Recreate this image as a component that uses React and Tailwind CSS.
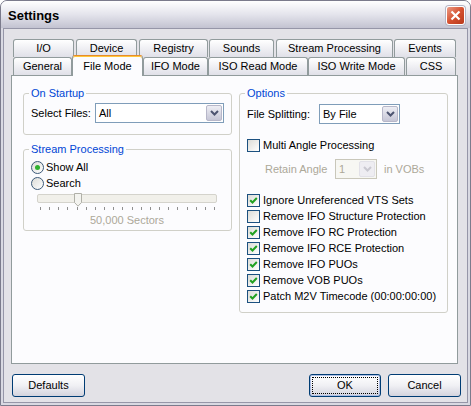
import React from "react";

const font = "font-['Liberation_Sans',Arial,sans-serif]";

function Tab({ label, className = "", selected }) {
  if (selected) {
    return (
      <div
        className={`relative z-10 h-[21px] -mb-px flex items-center justify-center bg-[#fcfcfe] border border-b-0 border-[#919b9c] border-t-[#e68b2c] rounded-t-[3px] shadow-[inset_0_1px_0_#ffc83c] ${className}`}
      >
        {label}
      </div>
    );
  }
  return (
    <div
      className={`h-[18px] flex items-center justify-center bg-gradient-to-b from-white to-[#e0e0e8] border border-b-0 border-[#919b9c] rounded-t-[3px] ${className}`}
    >
      {label}
    </div>
  );
}

function Chevron({ color }) {
  return (
    <svg width="9" height="6" viewBox="0 0 9 6">
      <path d="M1 1 L4.5 4.5 L8 1" stroke={color} strokeWidth="2" fill="none" />
    </svg>
  );
}

function Select({ value, className = "", disabled }) {
  return (
    <div
      className={`h-[20px] flex items-center border ${
        disabled ? "border-[#c9c7ba] bg-[#f7f7f3] text-[#aca899]" : "border-[#7f9db9] bg-white"
      } ${className}`}
    >
      <span className="flex-1 pl-[3px]">{value}</span>
      <span
        className={`w-[16px] h-[16px] mr-px rounded-[2px] border flex items-center justify-center ${
          disabled
            ? "border-[#e2e1e8] bg-[#eeedf2]"
            : "border-[#b7b7c9] bg-gradient-to-b from-[#eeeef4] to-[#c6c6d6]"
        }`}
      >
        <Chevron color={disabled ? "#c9c8d0" : "#4d5470"} />
      </span>
    </div>
  );
}

function Check({ checked, label }) {
  return (
    <div className="flex items-center h-[16px]">
      <span className="w-[13px] h-[13px] border border-[#1c5180] bg-gradient-to-br from-[#dcdcd7] to-white flex items-center justify-center">
        {checked && (
          <svg width="9" height="9" viewBox="0 0 9 9">
            <path d="M1.2 4.2 L3.5 6.5 L7.8 2" stroke="#21a121" strokeWidth="2" fill="none" />
          </svg>
        )}
      </span>
      <span className="ml-[3px]">{label}</span>
    </div>
  );
}

function Radio({ checked, label }) {
  return (
    <div className="flex items-center h-[16px]">
      <span className="w-[13px] h-[13px] rounded-full border border-[#3c5a78] bg-gradient-to-br from-[#dcdcd7] to-white flex items-center justify-center">
        {checked && <span className="w-[5px] h-[5px] rounded-full bg-[#2fb12f]" />}
      </span>
      <span className="ml-[2px]">{label}</span>
    </div>
  );
}

function Group({ title, className = "", children }) {
  return (
    <fieldset
      className={`border border-[#d0d0c8] rounded-[3px] px-[7px] ${className}`}
    >
      <legend className="-ml-[2px] px-[2px] leading-[13px] text-[#0046d5]">{title}</legend>
      {children}
    </fieldset>
  );
}

function Btn({ label, className = "", isDefault }) {
  return (
    <div
      className={`h-[23px] rounded-[3px] border border-[#003c74] bg-gradient-to-b from-white via-[#f0f0f4] to-[#d4d4de] flex p-[2px] ${
        isDefault ? "shadow-[inset_0_0_0_1px_#aebfe6]" : ""
      } ${className}`}
    >
      <div
        className={`flex-1 flex items-center justify-center ${
          isDefault ? "border border-dotted border-black" : ""
        }`}
      >
        {label}
      </div>
    </div>
  );
}

const ticks = Array.from({ length: 20 }, (_, i) => i);

export default function App() {
  return (
    <div
      className={`${font} text-[11px] text-black w-[471px] h-[406px] flex flex-col bg-[#d9d9e2] border border-[#7b7b8c] rounded-t-[7px] overflow-hidden`}
    >
      {/* title bar */}
      <div className="h-[27px] flex items-center justify-between pl-[7px] pr-[5px] bg-gradient-to-b from-white via-[#e4e4ec] to-[#c3c3d1]">
        <span className="mt-[2px] text-[13px] font-bold">Settings</span>
        <span className="w-[19px] h-[19px] mt-[1px] rounded-[3px] border border-white bg-gradient-to-br from-[#ea9a84] via-[#d5502f] to-[#b8391c] flex items-center justify-center shadow-[0_0_0_1px_#b4b4c4]">
          <svg width="11" height="11" viewBox="0 0 11 11">
            <path d="M1.5 1.5 L9.5 9.5 M9.5 1.5 L1.5 9.5" stroke="white" strokeWidth="2.2" />
          </svg>
        </span>
      </div>

      {/* body */}
      <div className="flex-1 mx-[2px] mb-[2px] border border-[#9696a8] bg-[#e3e2e7] flex flex-col">
        <div className="pt-[10px] pl-[9px] flex">
          <Tab label="I/O" className="w-[61px]" />
          <Tab label="Device" className="w-[61px] ml-[2px]" />
          <Tab label="Registry" className="w-[69px] ml-[2px]" />
          <Tab label="Sounds" className="w-[65px] ml-px" />
          <Tab label="Stream Processing" className="w-[117px] ml-[2px]" />
          <Tab label="Events" className="w-[62px] ml-px" />
        </div>
        <div className="pl-[9px] flex items-end h-[18px]">
          <Tab label="General" className="w-[59px]" />
          <Tab label="File Mode" className="w-[71px]" selected />
          <Tab label="IFO Mode" className="w-[65px]" />
          <Tab label="ISO Read Mode" className="w-[100px]" />
          <Tab label="ISO Write Mode" className="w-[97px]" />
          <Tab label="CSS" className="w-[50px] ml-px" />
        </div>

        {/* tab page */}
        <div className="ml-[7px] w-[447px] h-[289px] border border-[#919b9c] bg-[#fcfcfe] pl-[11px] pt-[11px] flex gap-[7px] items-start">
          <div className="w-[209px] flex flex-col">
            <Group title="On Startup" className="pb-[11px]">
              <div className="mt-[3px] flex items-center">
                <span className="w-[64px]">Select Files:</span>
                <Select value="All" className="w-[129px]" />
              </div>
            </Group>
            <Group title="Stream Processing" className="mt-[8px] pb-[3px]">
              <div className="mt-[3px]">
                <Radio checked label="Show All" />
                <Radio label="Search" />
              </div>
              <div className="relative mt-[3px] ml-[6px] w-[180px] h-[9px] border border-[#d4d3cc] bg-[#f1f0ea] rounded-[2px]">
                <svg
                  className="absolute left-[36px] -top-[2px]"
                  width="8"
                  height="14"
                  viewBox="0 0 8 14"
                >
                  <path
                    d="M0.5 0.5 H7.5 V9.5 L4 13.2 L0.5 9.5 Z"
                    fill="#f3f3ef"
                    stroke="#b0b0a8"
                  />
                </svg>
              </div>
              <div className="mt-[4px] ml-[9px] w-[175px] flex justify-between">
                {ticks.map((t) => (
                  <span key={t} className="w-px h-[3px] bg-[#8f8f8f]" />
                ))}
              </div>
              <div className="mt-[3px] ml-[6px] w-[180px] text-center leading-[14px] text-[#aca899]">
                50,000 Sectors
              </div>
            </Group>
          </div>

          <Group title="Options" className="w-[209px] pb-[8px]">
            <div className="mt-[4px] flex items-center">
              <span className="w-[72px]">File Splitting:</span>
              <Select value="By File" className="w-[81px]" />
            </div>
            <div className="mt-[13px]">
              <Check label="Multi Angle Processing" />
            </div>
            <div className="mt-[6px] pl-[18px] flex items-center text-[#aca899]">
              <span className="w-[70px]">Retain Angle</span>
              <Select value="1" className="w-[42px]" disabled />
              <span className="ml-[7px]">in VOBs</span>
            </div>
            <div className="mt-[13px] flex flex-col">
              <Check checked label="Ignore Unreferenced VTS Sets" />
              <Check label="Remove IFO Structure Protection" />
              <Check checked label="Remove IFO RC Protection" />
              <Check checked label="Remove IFO RCE Protection" />
              <Check checked label="Remove IFO PUOs" />
              <Check checked label="Remove VOB PUOs" />
              <Check checked label="Patch M2V Timecode (00:00:00:00)" />
            </div>
          </Group>
        </div>

        {/* buttons */}
        <div className="mt-[10px] pl-[8px] pr-[6px] flex items-center">
          <Btn label="Defaults" className="w-[73px]" />
          <div className="flex-1" />
          <Btn label="OK" className="w-[72px]" isDefault />
          <Btn label="Cancel" className="w-[73px] ml-[7px]" />
        </div>
      </div>
    </div>
  );
}
